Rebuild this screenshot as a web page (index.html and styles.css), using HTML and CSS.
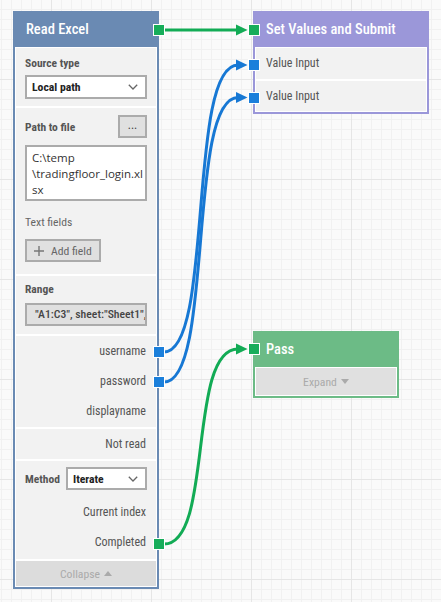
FILE: index.html
```html
<!DOCTYPE html>
<html>
<head>
<meta charset="utf-8">
<link rel="stylesheet" href="styles.css">
</head>
<body>
<div class="canvas">
  <div class="node node-excel">
    <div class="node-head">Read Excel<span class="port green port-out"></span></div>
    <div class="node-body">
      <div class="section sec-source">
        <div class="label">Source type</div>
        <div class="select"><span>Local path</span><svg class="chev" width="10" height="6" viewBox="0 0 10 6"><polyline points="0.8,0.8 5,5 9.2,0.8" fill="none" stroke="#666" stroke-width="1.3"/></svg></div>
      </div>
      <div class="section sec-path">
        <div class="path-row">
          <div class="label">Path to file</div>
          <div class="dots-btn">...</div>
        </div>
        <div class="path-box">C:\temp<br>\tradingfloor_login.xl<br>sx</div>
        <div class="plain-label">Text fields</div>
        <div class="add-btn"><svg width="10" height="10" viewBox="0 0 10 10"><path d="M5 0V10M0 5H10" stroke="#777" stroke-width="1.4" fill="none"/></svg><span>Add field</span></div>
      </div>
      <div class="section sec-range">
        <div class="label range-label">Range</div>
        <div class="range-input">"A1:C3", sheet:"Sheet1", header:true</div>
      </div>
      <div class="section sec-rows">
        <div class="out-row">username<span class="port blue"></span></div>
        <div class="out-row">password<span class="port blue"></span></div>
        <div class="out-row">displayname</div>
      </div>
      <div class="section">
        <div class="out-row">Not read</div>
      </div>
      <div class="section sec-method">
        <div class="method-row">
          <div class="label">Method</div>
          <div class="select select-method"><span>Iterate</span><svg class="chev" width="10" height="6" viewBox="0 0 10 6"><polyline points="0.8,0.8 5,5 9.2,0.8" fill="none" stroke="#666" stroke-width="1.3"/></svg></div>
        </div>
        <div class="out-row">Current index</div>
        <div class="out-row">Completed<span class="port green port-completed"></span></div>
      </div>
      <div class="node-foot">Collapse <span class="tri-up"></span></div>
    </div>
  </div>

  <div class="node node-submit">
    <div class="node-head">Set Values and Submit<span class="port green port-in"></span></div>
    <div class="node-body">
      <div class="in-row in-row-first">Value Input<span class="port blue"></span></div>
      <div class="in-row">Value Input<span class="port blue"></span></div>
    </div>
  </div>

  <div class="node node-pass">
    <div class="node-head">Pass<span class="port green port-in port-pass"></span></div>
    <div class="node-body">
      <div class="node-foot expand">Expand <span class="tri-down"></span></div>
    </div>
  </div>

  <svg class="edges" width="441" height="602" viewBox="0 0 441 602">
    <path d="M164 30 L238 30" fill="none" stroke="#12ab55" stroke-width="3"/>
    <polygon points="236,24.5 247.5,30 236,35.5" fill="#12ab55"/>
    <path d="M164 352 C214 352, 187 65, 238 65" fill="none" stroke="#1778d4" stroke-width="3"/>
    <polygon points="236,59.5 247.5,65 236,70.5" fill="#1778d4"/>
    <path d="M164 382 C214 382, 187 97.5, 238 97.5" fill="none" stroke="#1778d4" stroke-width="3"/>
    <polygon points="236,92 247.5,97.5 236,103" fill="#1778d4"/>
    <path d="M164 544 C214 544, 187 349, 238 349" fill="none" stroke="#12ab55" stroke-width="3"/>
    <polygon points="236,343.5 247.5,349 236,354.5" fill="#12ab55"/>
  </svg>
</div>
</body>
</html>
```
FILE: styles.css
```css
body {
  margin: 0;
}

.canvas {
  position: relative;
  width: 441px;
  height: 602px;
  overflow: hidden;
  background-color: #fafafa;
  background-image:
    linear-gradient(to bottom, #e6e6e6 1px, transparent 1px),
    linear-gradient(to right, #e6e6e6 1px, transparent 1px),
    linear-gradient(to bottom, #f1f1f1 1px, transparent 1px),
    linear-gradient(to right, #f1f1f1 1px, transparent 1px);
  background-size: 100px 100px, 100px 100px, 10px 10px, 10px 10px;
  background-position: 0 79px, 51px 0, 0 9px, 1px 0;
  font-family: "Roboto Condensed", "Liberation Sans Narrow", "Arial Narrow", Roboto, sans-serif;
  font-stretch: condensed;
  font-size: 12px;
  color: #555;
}

.node {
  position: absolute;
  box-sizing: border-box;
  border: 2px solid var(--nc);
  background: var(--nc);
}

.node-excel {
  --nc: #6a8ab3;
  left: 13px;
  top: 11px;
  width: 146px;
  height: 578px;
}

.node-submit {
  --nc: #9b97d9;
  left: 253px;
  top: 11px;
  width: 176px;
  height: 103px;
}

.node-pass {
  --nc: #6cbb86;
  left: 253px;
  top: 331px;
  width: 146px;
  height: 67px;
}

.node-head {
  position: relative;
  height: 34px;
  box-sizing: border-box;
  padding: 0 0 1px 11px;
  line-height: 33px;
  color: #fff;
  font-size: 14.5px;
  font-weight: 500;
  white-space: nowrap;
}

.node-body {
  background: #f2f2f2;
  border: 1px solid #fff;
}

.section {
  border-top: 2px solid #fff;
}

.section:first-child {
  border-top: 0;
}

.label {
  font-weight: bold;
  font-size: 11.5px;
  color: #555;
}

.sec-source {
  padding: 7px 9px 7px;
}

.sec-source .label {
  line-height: 17px;
  margin-bottom: 3px;
}

.select {
  display: flex;
  align-items: center;
  justify-content: space-between;
  box-sizing: border-box;
  height: 24px;
  border: 2px solid #ababab;
  background: #fff;
  padding: 0 7px 0 5px;
  font-weight: bold;
  font-size: 11.7px;
  color: #222;
}

.chev {
  display: block;
}

.sec-path {
  padding: 7px 9px 12px;
}

.path-row {
  display: flex;
  align-items: center;
  justify-content: space-between;
  height: 23px;
}

.dots-btn {
  box-sizing: border-box;
  width: 29px;
  height: 23px;
  border: 2px solid #ababab;
  background: #e0e0e0;
  text-align: center;
  line-height: 17px;
  font-size: 12px;
  color: #444;
}

.path-box {
  box-sizing: border-box;
  margin-top: 7px;
  height: 56px;
  border: 2px solid #ababab;
  background: #fff;
  padding: 3px 4px 3px 5px;
  font-family: "Open Sans", "Noto Sans", sans-serif;
  font-stretch: normal;
  font-size: 11.5px;
  line-height: 16px;
  color: #333;
  white-space: nowrap;
  overflow: hidden;
}

.plain-label {
  margin-top: 13px;
  line-height: 16px;
  font-size: 11.7px;
  color: #666;
}

.add-btn {
  display: flex;
  align-items: center;
  gap: 7px;
  box-sizing: border-box;
  margin-top: 9px;
  width: 76px;
  height: 23px;
  border: 2px solid #ababab;
  background: #e0e0e0;
  padding-left: 7px;
  font-size: 11.7px;
  color: #666;
}

.add-btn svg {
  display: block;
}

.sec-range {
  padding: 5px 9px 8px;
}

.range-label {
  line-height: 16px;
  margin-bottom: 6px;
}

.range-input {
  box-sizing: border-box;
  height: 23px;
  border: 2px solid #ababab;
  background: #e0e0e0;
  padding-left: 8px;
  line-height: 19px;
  white-space: nowrap;
  overflow: hidden;
  font-weight: 500;
  font-size: 11.7px;
  color: #444;
}

.sec-rows {
  padding-bottom: 1px;
}

.out-row {
  position: relative;
  height: 30px;
  line-height: 30px;
  text-align: right;
  padding-right: 10px;
  color: #555;
}

.out-row .port {
  right: -9px;
  top: 10px;
}

.out-row .port-completed {
  top: 11px;
}

.sec-method {
  padding-bottom: 2px;
}

.method-row {
  display: flex;
  align-items: center;
  justify-content: space-between;
  padding: 6px 9px 7px;
}

.select-method {
  width: 81px;
  height: 23px;
  padding-left: 5px;
}

.node-foot {
  border-top: 2px solid #fff;
  height: 25px;
  background: #dcdcdc;
  display: flex;
  align-items: center;
  justify-content: center;
  gap: 4px;
  font-size: 11.7px;
  color: #aaa;
}

.node-foot.expand {
  border-top: 0;
  height: 27px;
  background: #e0e0e0;
}

.tri-up {
  width: 0;
  height: 0;
  border-left: 4.5px solid transparent;
  border-right: 4.5px solid transparent;
  border-bottom: 5px solid #aaa;
}

.tri-down {
  width: 0;
  height: 0;
  border-left: 4.5px solid transparent;
  border-right: 4.5px solid transparent;
  border-top: 5px solid #aaa;
}

.in-row {
  position: relative;
  height: 30px;
  line-height: 30px;
  padding-left: 10px;
  border-top: 2px solid #fff;
  color: #555;
}

.in-row-first {
  height: 31px;
  line-height: 31px;
  border-top: 0;
}

.in-row .port {
  left: -8px;
  top: 11px;
}

.port {
  position: absolute;
  width: 10px;
  height: 10px;
  border: 1px solid #fff;
  z-index: 2;
}

.port.green {
  background: #17ad5a;
}

.port.blue {
  background: #1b7fdb;
}

.port-out {
  right: -8px;
  top: 11px;
}

.port-in {
  left: -7px;
  top: 11px;
}

.port-pass {
  top: 10px;
}

.edges {
  position: absolute;
  left: 0;
  top: 0;
  z-index: 1;
  pointer-events: none;
}
```
